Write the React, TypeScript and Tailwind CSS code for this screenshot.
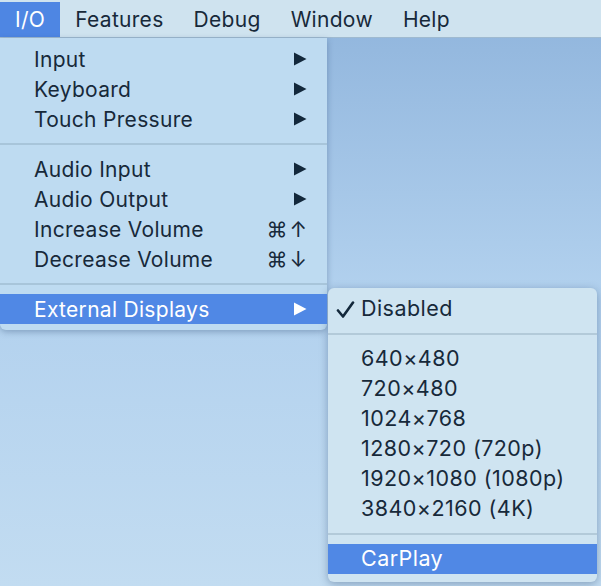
import React from "react";

type Item =
  | { kind: "sep" }
  | { kind: "item"; label: string; arrow?: boolean; shortcut?: string; active?: boolean; checked?: boolean };

const mainItems: Item[] = [
  { kind: "item", label: "Input", arrow: true },
  { kind: "item", label: "Keyboard", arrow: true },
  { kind: "item", label: "Touch Pressure", arrow: true },
  { kind: "sep" },
  { kind: "item", label: "Audio Input", arrow: true },
  { kind: "item", label: "Audio Output", arrow: true },
  { kind: "item", label: "Increase Volume", shortcut: "⌘↑" },
  { kind: "item", label: "Decrease Volume", shortcut: "⌘↓" },
  { kind: "sep" },
  { kind: "item", label: "External Displays", arrow: true, active: true },
];

const subItems: Item[] = [
  { kind: "item", label: "Disabled", checked: true },
  { kind: "sep" },
  { kind: "item", label: "640×480" },
  { kind: "item", label: "720×480" },
  { kind: "item", label: "1024×768" },
  { kind: "item", label: "1280×720 (720p)" },
  { kind: "item", label: "1920×1080 (1080p)" },
  { kind: "item", label: "3840×2160 (4K)" },
  { kind: "sep" },
  { kind: "item", label: "CarPlay", active: true },
];

const Arrow: React.FC<{ white?: boolean }> = ({ white }) => (
  <svg width="14" height="14" viewBox="0 0 14 14">
    <polygon points="1,0.5 13.5,7 1,13.5" fill={white ? "#ffffff" : "#13283b"} />
  </svg>
);

const Check = () => (
  <svg width="19" height="18" viewBox="0 0 19 18" className="absolute left-[8px] top-[7px]">
    <path d="M2 9.5 L7 15.5 L17 1.5" fill="none" stroke="#13283b" strokeWidth="2.6" strokeLinecap="round" strokeLinejoin="round" />
  </svg>
);

const MenuList: React.FC<{ items: Item[] }> = ({ items }) => (
  <>
    {items.map((it, i) =>
      it.kind === "sep" ? (
        <div key={i} className="h-[20px] flex items-center">
          <div className="h-[2px] w-full bg-[#a8c5da]" />
        </div>
      ) : (
        <div
          key={i}
          className={
            "relative h-[30px] flex items-center justify-between pl-[34px] pr-[20px] " +
            (it.active ? "bg-[#5088e5] text-white" : "text-[#17293a]")
          }
        >
          {it.checked && <Check />}
          <span>{it.label}</span>
          {it.arrow && <Arrow white={it.active} />}
          {it.shortcut && <span className="tracking-[2px] mr-[-2px]">{it.shortcut}</span>}
        </div>
      )
    )}
  </>
);

export default function App() {
  const bar = ["I/O", "Features", "Debug", "Window", "Help"];
  return (
    <div
      className="w-[601px] h-[586px] overflow-hidden bg-gradient-to-b from-[#8fb4dc] via-[#b2d1ee] to-[#c2dcf1] text-[21px] tracking-[0.3px] leading-none"
      style={{ fontFamily: "Inter, 'Liberation Sans', sans-serif" }}
    >
      <div className="h-[38px] pt-[2px] bg-[#cfe3ef] border-b border-[#9fbad0] flex tracking-[0.3px]">
        {bar.map((b, i) => (
          <div
            key={b}
            className={
              "h-full px-[15px] flex items-center " +
              (i === 0 ? "bg-[#4e86e3] text-white" : "text-[#17293a]")
            }
          >
            {b}
          </div>
        ))}
      </div>
      <div className="flex items-start">
        <div className="w-[327px] bg-[#bedbf1] rounded-b-[6px] py-[6px] shadow-[0_2px_6px_rgba(40,70,110,0.35)] overflow-hidden">
          <MenuList items={mainItems} />
        </div>
        <div className="mt-[250px] ml-[1px] w-[269px] bg-[#cfe4f1] rounded-[6px] pt-[6px] pb-[8px] shadow-[0_2px_8px_rgba(40,70,110,0.4)] overflow-hidden text-[21.5px] tracking-[0.45px]">
          <SubList />
        </div>
      </div>
    </div>
  );
}

function SubList() {
  return (
    <>
      {subItems.map((it, i) =>
        it.kind === "sep" ? (
          <div key={i} className="h-[20px] flex items-center">
            <div className="h-[2px] w-full bg-[#b3cad9]" />
          </div>
        ) : (
          <div
            key={i}
            className={
              "relative h-[30px] flex items-center pl-[33px] " +
              (it.active ? "bg-[#5088e5] text-white" : "text-[#17293a]")
            }
          >
            {it.checked && <Check />}
            <span>{it.label}</span>
          </div>
        )
      )}
    </>
  );
}
